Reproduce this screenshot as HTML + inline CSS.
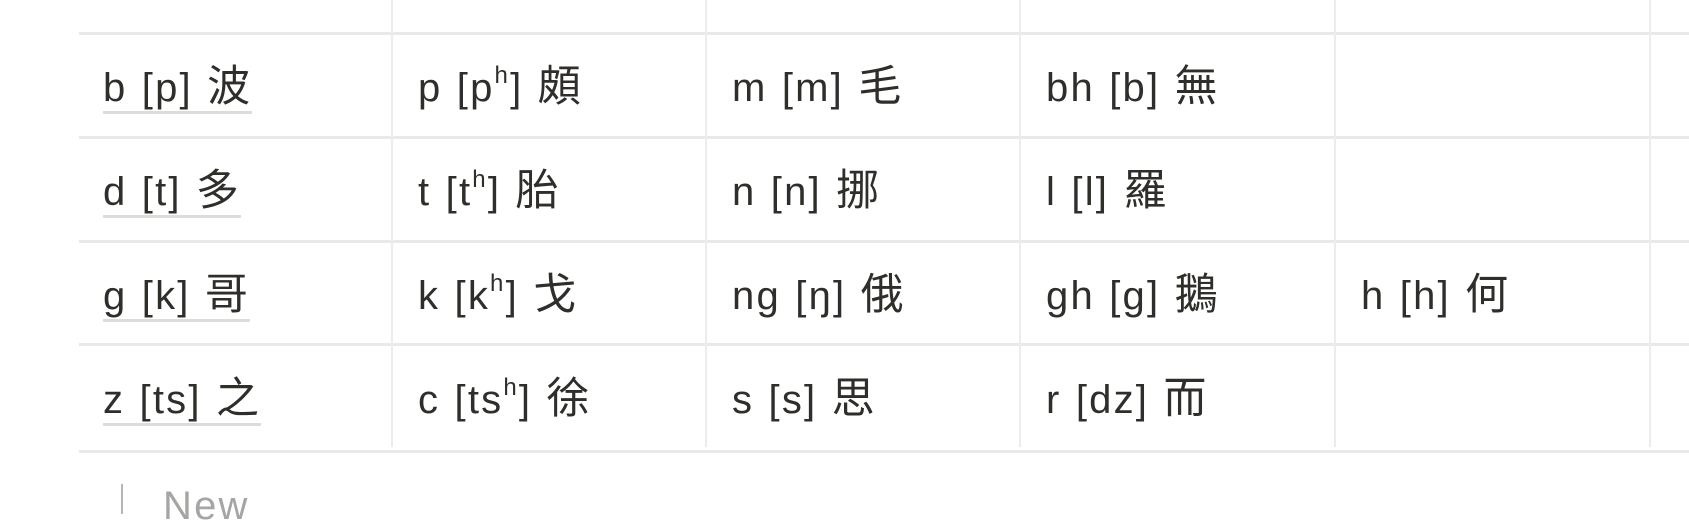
<!DOCTYPE html>
<html><head><meta charset="utf-8"><style>
body{margin:0;width:1689px;height:500px;overflow:hidden;background:#fff;font-family:"Liberation Sans","Noto Sans CJK TC",sans-serif;color:#2f2e2b}
.h{position:absolute;left:79px;right:0;height:3px;background:#e9e9e7}
.v{position:absolute;width:2px;background:#ececeb;top:0;height:447px}
.t{position:absolute;font-size:40px;line-height:46px;white-space:nowrap;letter-spacing:2.2px;word-spacing:1px}
.t b{font-weight:normal;font-size:43px}
.u{border-bottom:3px solid #dcdcda;padding-bottom:0px}
sup{font-size:24px;vertical-align:18px;line-height:0}
</style></head><body>
<div class="h" style="top:32px"></div>
<div class="h" style="top:136px"></div>
<div class="h" style="top:240px"></div>
<div class="h" style="top:343px"></div>
<div class="h" style="top:450px"></div>
<div class="v" style="left:391px"></div>
<div class="v" style="left:705px"></div>
<div class="v" style="left:1019px"></div>
<div class="v" style="left:1334px"></div>
<div class="v" style="left:1649px"></div>

<div class="t u" style="left:103px;top:64px">b [p] <b>波</b></div>
<div class="t" style="left:418px;top:64px">p [p<sup>h</sup>] <b>頗</b></div>
<div class="t" style="left:732px;top:64px">m [m] <b>毛</b></div>
<div class="t" style="left:1046px;top:64px">bh [b] <b>無</b></div>

<div class="t u" style="left:103px;top:168px">d [t] <b>多</b></div>
<div class="t" style="left:418px;top:168px">t [t<sup>h</sup>] <b>胎</b></div>
<div class="t" style="left:732px;top:168px">n [n] <b>挪</b></div>
<div class="t" style="left:1046px;top:168px">l [l] <b>羅</b></div>

<div class="t u" style="left:103px;top:272px">g [k] <b>哥</b></div>
<div class="t" style="left:418px;top:272px">k [k<sup>h</sup>] <b>戈</b></div>
<div class="t" style="left:732px;top:272px">ng [ŋ] <b>俄</b></div>
<div class="t" style="left:1046px;top:272px">gh [g] <b>鵝</b></div>
<div class="t" style="left:1361px;top:272px">h [h] <b>何</b></div>

<div class="t u" style="left:103px;top:376px">z [ts] <b>之</b></div>
<div class="t" style="left:418px;top:376px">c [ts<sup>h</sup>] <b>徐</b></div>
<div class="t" style="left:732px;top:376px">s [s] <b>思</b></div>
<div class="t" style="left:1046px;top:376px">r [dz] <b>而</b></div>

<div style="position:absolute;left:121px;top:484px;width:2px;height:30px;background:#b5b5b3"></div>
<div class="t" style="left:163px;top:483px;color:#a5a5a3">New</div>
</body></html>
